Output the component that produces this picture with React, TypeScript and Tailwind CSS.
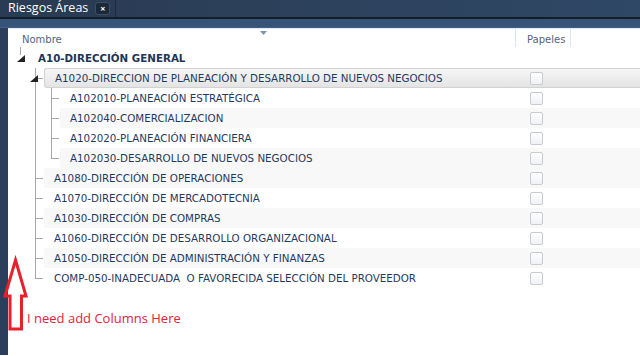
import React from "react";

type Row = {
  label: string;
  depth: 0 | 1 | 2;
  last?: boolean;
  expander?: boolean;
  stripe?: boolean;
  selected?: boolean;
};

const rows: Row[] = [
  { label: "A10-DIRECCIÓN GENERAL", depth: 0, expander: true },
  { label: "A1020-DIRECCION DE PLANEACIÓN Y DESARROLLO DE NUEVOS NEGOCIOS", depth: 1, expander: true, selected: true },
  { label: "A102010-PLANEACIÓN ESTRATÉGICA", depth: 2 },
  { label: "A102040-COMERCIALIZACION", depth: 2, stripe: true },
  { label: "A102020-PLANEACIÓN FINANCIERA", depth: 2 },
  { label: "A102030-DESARROLLO DE NUEVOS NEGOCIOS", depth: 2, last: true, stripe: true },
  { label: "A1080-DIRECCIÓN DE OPERACIONES", depth: 1, stripe: true },
  { label: "A1070-DIRECCIÓN DE MERCADOTECNIA", depth: 1 },
  { label: "A1030-DIRECCIÓN DE COMPRAS", depth: 1, stripe: true },
  { label: "A1060-DIRECCIÓN DE DESARROLLO ORGANIZACIONAL", depth: 1 },
  { label: "A1050-DIRECCIÓN DE ADMINISTRACIÓN Y FINANZAS", depth: 1, stripe: true },
  { label: "COMP-050-INADECUADA  O FAVORECIDA SELECCIÓN DEL PROVEEDOR", depth: 1, last: true },
];

function Tri() {
  return (
    <svg width="8" height="7" viewBox="0 0 8 7" className="block">
      <polygon points="0,7 8,7 8,0" fill="#222" />
    </svg>
  );
}

function Checkbox() {
  return (
    <div className="w-[13px] h-[13px] border border-[#c6ccd2] rounded-[2px] bg-gradient-to-b from-white to-[#eef1f4]" />
  );
}

function Elbow({ last, expander }: { last?: boolean; expander?: boolean }) {
  return (
    <div className="relative w-[16px] h-full shrink-0">
      <div className={`absolute left-[7px] top-0 w-px bg-[#a8a8a8] ${last ? "h-[10px]" : "h-full"}`} />
      <div className="absolute left-[7px] top-[10px] h-px w-[8px] bg-[#a8a8a8]" />
      {expander && (
        <div className="absolute left-[2px] top-[7px]">
          <Tri />
        </div>
      )}
    </div>
  );
}

function Line() {
  return (
    <div className="relative w-[16px] h-full shrink-0">
      <div className="absolute left-[7px] top-0 w-px h-full bg-[#a8a8a8]" />
    </div>
  );
}

function TreeRow({ r }: { r: Row }) {
  const textCls =
    r.depth === 0
      ? "font-bold text-[#1f3556] text-[10.3px]"
      : "text-[#1f3a5f] text-[10.3px] pl-[10px]";
  const bg = r.selected
    ? "bg-gradient-to-b from-[#f6f6f6] to-[#e4e4e4] border border-r-0 border-[#d2d2d2] rounded-l-[3px]"
    : r.stripe
    ? "bg-[#f8f8f8] rounded-l-[3px]"
    : "";
  return (
    <div className="flex h-[20px] items-stretch">
      {r.depth === 0 ? (
        <div className="flex items-center w-[30px] pl-[9px] shrink-0">
          <div className="relative">
            <div className="absolute left-[3px] -top-[8px] w-px h-[8px] bg-[#a8a8a8]" />
            <Tri />
          </div>
        </div>
      ) : (
        <>
          <div className="w-[20px] shrink-0" />
          {r.depth === 1 ? (
            <Elbow last={r.last} expander={r.expander} />
          ) : (
            <>
              <Line />
              <Elbow last={r.last} />
            </>
          )}
        </>
      )}
      <div className={`flex flex-1 items-center ${bg}`}>
        <div className={`flex-1 whitespace-pre leading-none ${textCls}`}>{r.label}</div>
        <div className="w-[125px] shrink-0 flex items-center pl-[15px]">
          {r.depth > 0 && <Checkbox />}
        </div>
      </div>
    </div>
  );
}

export default function App() {
  return (
    <div
      className="relative w-[640px] h-[356px] overflow-hidden bg-white"
      style={{ fontFamily: "'DejaVu Sans', Verdana, sans-serif" }}
    >
      {/* top tab bar */}
      <div className="flex h-[17px] bg-gradient-to-r from-[#2a3b52] to-[#2f4866]">
        <div
          className="flex items-center w-[116px] border-r border-[#1d2a3b] bg-[#2a3c54] pl-[8px] gap-[7px]"
          style={{ fontFamily: "'Open Sans', sans-serif" }}
        >
          <span className="text-white text-[12.5px] leading-none">Riesgos Áreas</span>
          <div className="w-[15px] h-[13px] rounded-[3px] bg-[#1b2838] border border-[#3b4f68] flex items-center justify-center text-white text-[9px] font-bold leading-none">
            ×
          </div>
        </div>
      </div>
      <div className="h-[2px] bg-[#141d28]" />
      <div className="h-[9px] bg-[#355477] border-b border-[#3f6189]" />

      <div className="flex h-[327px]">
        <div className="w-[8px] bg-[#2b3f5c] shrink-0" />
        <div className="flex-1 flex flex-col bg-white">
          {/* header */}
          <div className="relative flex h-[19px] border-t border-[#dfe8f2]">
            <div className="flex-1 pl-[14px] pt-[3px] text-[10px] text-[#55647a]">Nombre</div>
            <div className="absolute left-[252px] top-[2px]">
              <svg width="7" height="4" viewBox="0 0 7 4">
                <polygon points="0,0 7,0 3.5,4" fill="#7d94ac" />
              </svg>
            </div>
            <div className="w-[56px] border-x border-[#dce6f0] pl-[11px] pt-[3px] text-[10px] text-[#55647a]">
              Papeles
            </div>
            <div className="w-[69px]" />
          </div>
          <div className="h-[1px]" />
          {rows.map((r, i) => (
            <TreeRow key={i} r={r} />
          ))}
        </div>
      </div>

      {/* annotation arrow */}
      <svg className="absolute left-0 top-0" width="40" height="356" viewBox="0 0 40 356">
        <polygon
          points="15.5,260 26,296 21.5,296 21.5,329 10,329 10,296 5,296"
          fill="none"
          stroke="#e8202b"
          strokeWidth="3"
          strokeLinejoin="miter"
        />
      </svg>
      <div
        className="absolute left-[27px] top-[312px] text-[13px] text-[#e8203a] leading-none"
        style={{ fontFamily: "'Open Sans', sans-serif" }}
      >
        I need add Columns Here
      </div>
    </div>
  );
}
